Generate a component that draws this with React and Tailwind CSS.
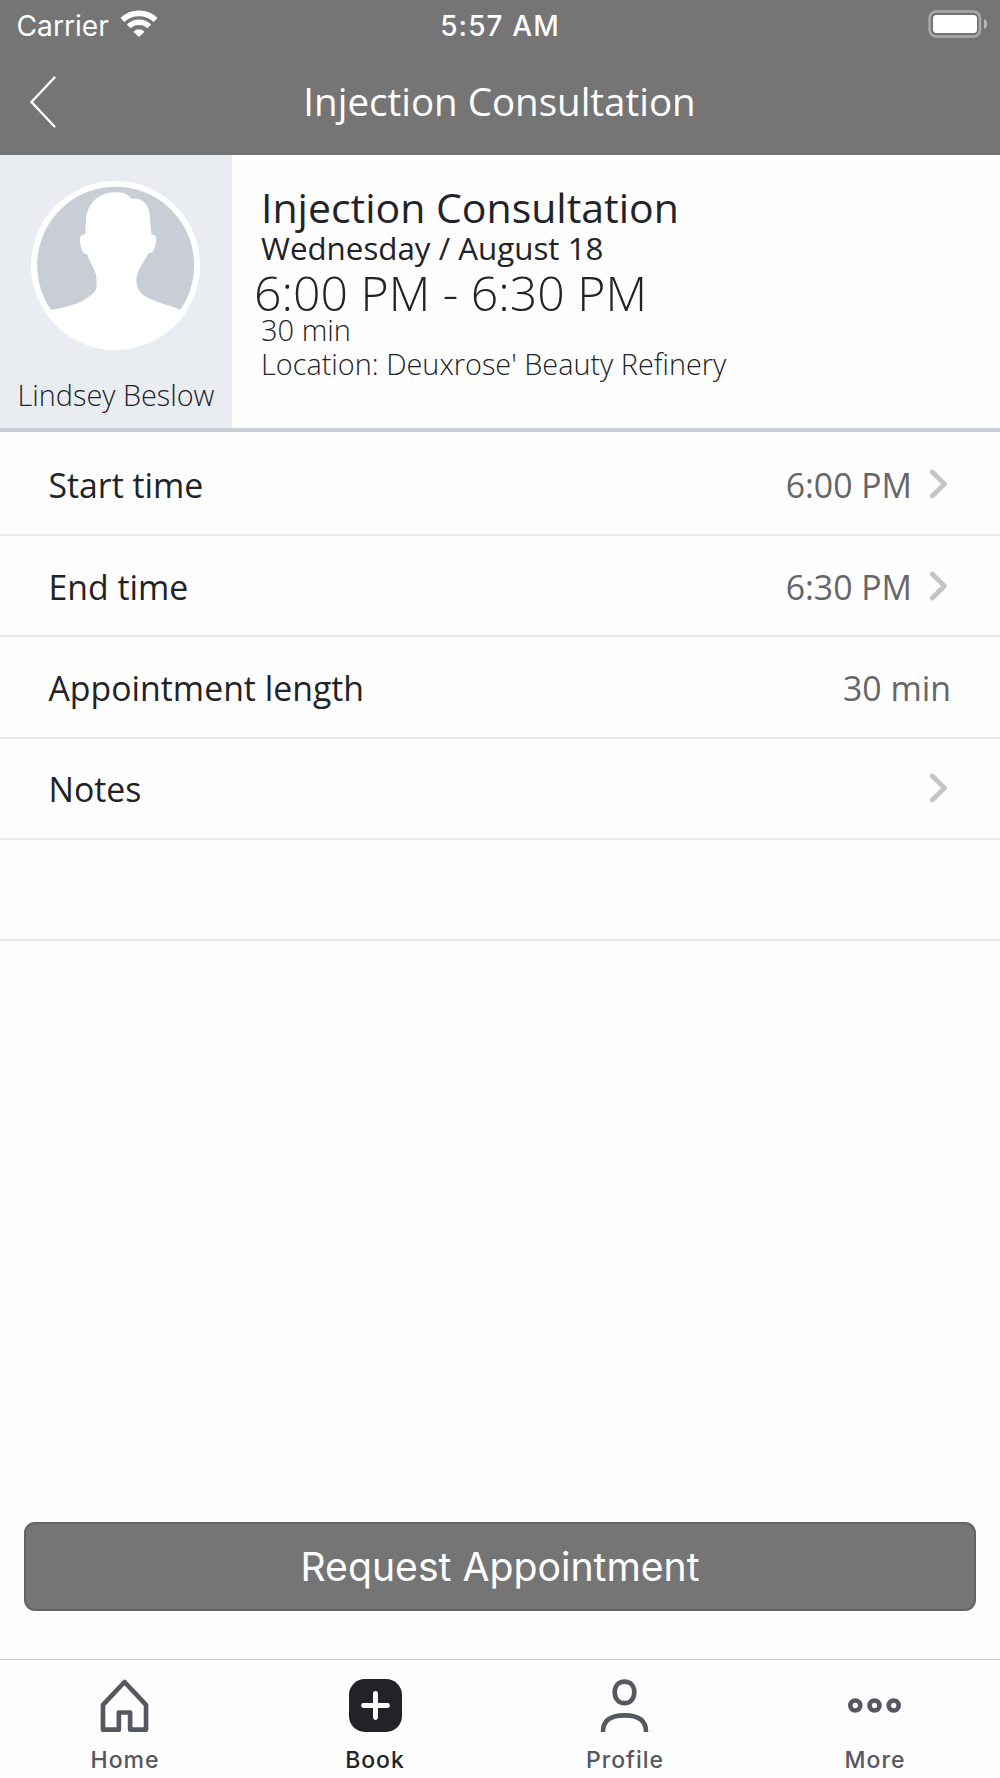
const rows = [
  { label: 'Start time', value: '6:00 PM', chevron: true },
  { label: 'End time', value: '6:30 PM', chevron: true },
  { label: 'Appointment length', value: '30 min' },
  { label: 'Notes', chevron: true },
  { label: '' },
]

const tabs = [
  { name: 'Home', icon: HomeIcon },
  { name: 'Book', icon: BookIcon, active: true },
  { name: 'Profile', icon: ProfileIcon },
  { name: 'More', icon: MoreIcon },
]

function HomeIcon() {
  return (
    <svg viewBox="-80 0 160 160" className="w-[53px] h-[53px] mr-px" fill="none" stroke="currentColor" strokeWidth="14" strokeLinejoin="round">
      <path d="M-65 153V78L0 9l65 69v75H17v-52h-34v52z" />
    </svg>
  )
}

function BookIcon() {
  return (
    <svg viewBox="0 0 160 160" className="w-[53px] h-[53px]">
      <rect width="160" height="160" rx="48" fill="currentColor" />
      <path d="M44 80h72M80 44v72" stroke="#fff" strokeWidth="15" strokeLinecap="round" />
    </svg>
  )
}

function ProfileIcon() {
  return (
    <svg viewBox="-80 0 160 160" className="w-[53px] h-[53px] mr-px" fill="none" stroke="currentColor" strokeWidth="14">
      <path d="M0 8c18 0 29.500 12 29.500 32S17 73 0 73s-29.500-13-29.500-33S-18 8 0 8z" />
      <path d="M-65 160c0-35 22-50 65-50s65 15 65 50" />
    </svg>
  )
}

function MoreIcon() {
  return (
    <svg viewBox="0 0 160 160" className="w-[53px] h-[53px] mr-[2px]" fill="none" stroke="currentColor" strokeWidth="14">
      <circle cx="22" cy="80" r="15" />
      <circle cx="80" cy="80" r="15" />
      <circle cx="138" cy="80" r="15" />
    </svg>
  )
}

function WifiIcon() {
  return (
    <svg viewBox="-19 -27 38 28" className="w-[38px] h-[28px]" fill="none" stroke="#fff">
      <path d="M-16.600 -17A24 24 0 0 1 16.600 -17" strokeWidth="5.600" />
      <path d="M-10.300 -10.600A15 15 0 0 1 10.300 -10.600" strokeWidth="5.400" />
      <path d="M0 0L-5.500 -5.300A7.600 7.600 0 0 1 5.500 -5.300z" fill="#fff" stroke="none" />
    </svg>
  )
}

function BatteryIcon() {
  return (
    <svg viewBox="0 0 60 28" className="w-[60px] h-[28px]">
      <rect x="1.600" y="1.400" width="50.400" height="25.200" rx="6.500" fill="none" stroke="#aaa" strokeWidth="2.500" />
      <rect x="5" y="5" width="44" height="18" rx="3.500" fill="#fff" />
      <path d="M56 9c4 1.500 4 8.500 0 10z" fill="#bababa" />
    </svg>
  )
}

function Avatar() {
  return (
    <svg viewBox="94 93 508 508" className="w-[169px] h-[169px] mr-px">
      <circle cx="348" cy="347" r="254" fill="#fff" />
      <path
        d="M154 480A236 236 0 1 1 543 480C515 468 475 460 447 445C422 431 410 415 411 388C413 358 435 335 447 310C460 312 466 300 470 275C472 260 468 253 456 254L451 198C450 160 422 139 395 147C388 135 375 126 345 127C297 127 261 163 259 212L257 254C244 253 239 260 241 275C244 300 250 314 264 314C270 340 290 360 291 388V408C291 422 285 429 268 441C240 462 200 474 154 480z"
        fill="#c9ced6"
      />
    </svg>
  )
}

export default function App() {
  return (
    <div className="w-[1000px] h-[1778px] flex flex-col bg-[#fefefe] text-[#222328] font-['Open_Sans',sans-serif] overflow-hidden whitespace-nowrap">
      <header className="h-[155px] shrink-0 bg-[#757575] text-white">
        <div className="h-[51px] grid grid-cols-3 items-center font-['Inter',sans-serif] text-[28px] leading-[34px]">
          <div className="flex items-center pl-[16.500px] gap-[11px]">
            <span className="text-[28.200px]">Carrier</span>
            <div className="pb-[3px]"><WifiIcon /></div>
          </div>
          <span className="text-center font-medium tracking-[1.100px]">5:57 AM</span>
          <div className="flex justify-end pr-3 pb-[3px]"><BatteryIcon /></div>
        </div>
        <div className="h-[100px] grid grid-cols-[1fr_auto_1fr] items-center">
          <svg viewBox="0 0 28 54" className="ml-[29px] mt-[2px] w-[28px] h-[54px]" fill="none" stroke="#fff" strokeWidth="2.400" strokeLinecap="round">
            <path d="M25.500 2.500L2.500 27L25.500 51.500" />
          </svg>
          <h1 className="text-[38.500px] leading-[50px] mr-px">Injection Consultation</h1>
        </div>
      </header>

      <section className="h-[277px] shrink-0 flex border-b-[4px] border-[#c9ced6]">
        <div className="w-[232px] bg-[#e9edf2] flex flex-col items-center pt-[26px]">
          <Avatar />
          <span className="mt-[25px] text-[28.800px] leading-[40px] font-light">Lindsey Beslow</span>
        </div>
        <div className="pl-[29px] pt-[27px]">
          <h2 className="text-[41px] leading-[50px]">Injection Consultation</h2>
          <p className="text-[31.300px] leading-[32px]">Wednesday / August 18</p>
          <p className="text-[48.200px] leading-[56px] font-light -ml-[7px]">6:00 PM - 6:30 PM</p>
          <p className="text-[29px] leading-[19px] font-light">30 min</p>
          <p className="text-[28.850px] leading-[34px] font-light mt-2">Location: Deuxrose' Beauty Refinery</p>
        </div>
      </section>

      <ul className="mt-[2.670px]">
        {rows.map((row, i) => (
          <li key={i} className="h-[101.330px] flex items-center pl-[48.500px] pr-[49px] border-b-2 border-[#ebebeb] text-[33.800px] leading-[50px]">
            <span className="flex-1 pt-[2px]">{row.label}</span>
            <span className="text-[#65666a] pt-[2px]">{row.value}</span>
            {row.chevron && (
              <svg viewBox="0 0 20 30" className="ml-[17px] mr-[2px] w-[20px] h-[30px]" fill="none" stroke="#c4c4c6" strokeWidth="4.700" strokeLinecap="round" strokeLinejoin="round">
                <path d="M3.300 3L15.500 15L3.300 27" />
              </svg>
            )}
          </li>
        ))}
      </ul>

      <div className="flex-1" />

      <button className="h-[89px] shrink-0 mx-6 mb-12 rounded-[11px] border-2 border-[#636363] bg-[#757575] text-white font-['Inter',sans-serif] text-[39.200px] leading-[50px]">
        Request Appointment
      </button>

      <nav className="h-[119px] shrink-0 grid grid-cols-4 border-t border-[#c6c6c6] font-['Inter',sans-serif] text-[#555761]">
        {tabs.map(tab => (
          <div key={tab.name} className={`flex flex-col items-center pt-[19px] ${tab.active ? 'text-[#222328]' : ''}`}>
            <tab.icon />
            <span className="mt-[14px] text-[23px] leading-[28px] font-[450] tracking-[1px]">{tab.name}</span>
          </div>
        ))}
      </nav>
    </div>
  )
}
